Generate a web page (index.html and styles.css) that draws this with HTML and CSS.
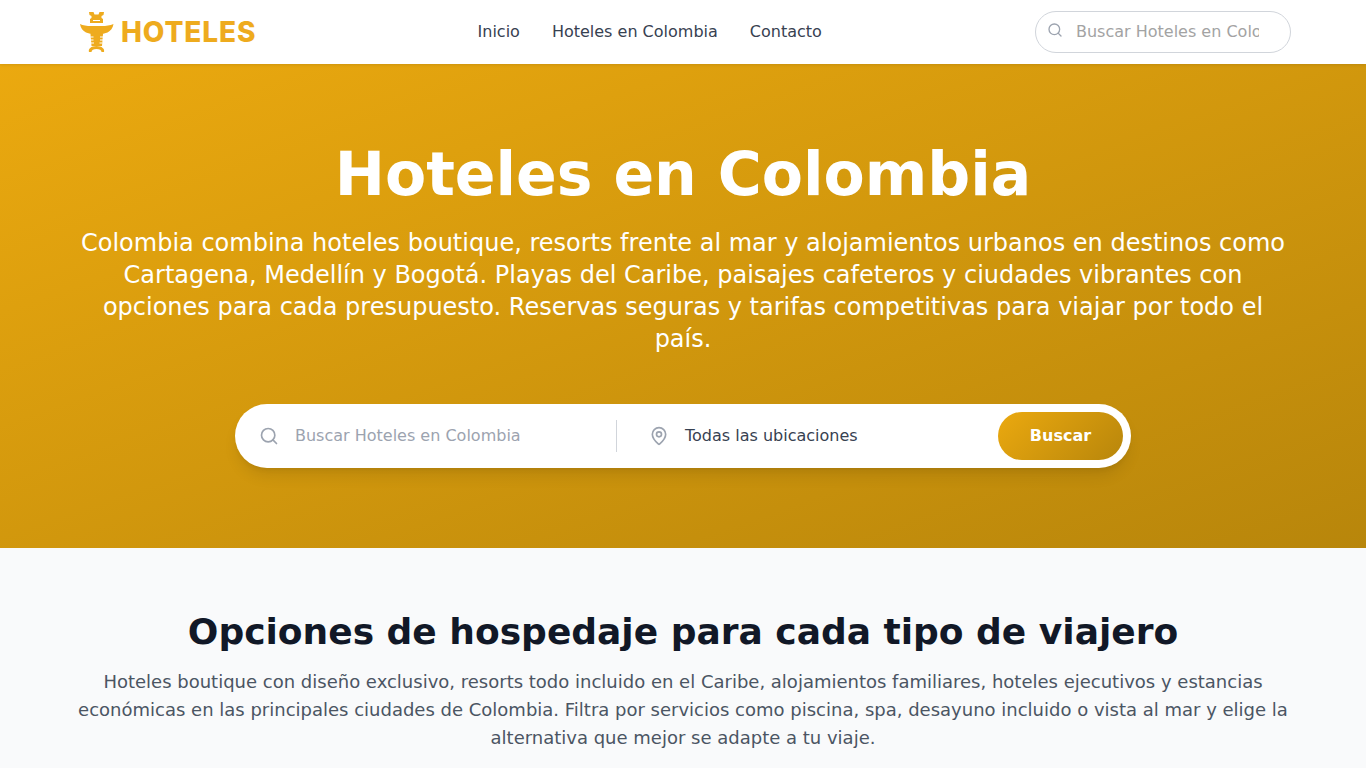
FILE: index.html
```html
<!DOCTYPE html>
<html lang="es">
<head>
  <meta charset="UTF-8">
  <title>Hoteles en Colombia</title>
  <link rel="stylesheet" href="styles.css">
</head>
<body>

  <!-- CABECERA -->
  <header class="cabecera">
    <div class="cabecera-interior">
      <a class="logo" href="#">
        <svg class="logo-icono" viewBox="0 0 34 40" width="34" height="40">
          <g fill="#eeab1e">
            <path d="M9 0h4.500l1 2.500h4L19.500 0H24l-.5 3-2 1v2l1.500 1v4H10V7l1.500-1V4l-2-1z"/>
            <path d="M0 12c3 1.500 7 2 11 2h11c4 0 8-.5 11.500-2-.5 4-3 7-6 8.500l-5 1.500H11l-5-1.500C3 19 .5 16 0 12z"/>
            <path d="M10.500 22h12.500l-1 12H11.500z"/>
            <path d="M9 40c-1-3 2-6 7.500-6s8.500 3 7.500 6h-2.500c0-2-2-3-5-3s-5 1-5 3z"/>
          </g>
          <path d="M10.500 25h3M10.500 28h3M11 31h3M20 25h3M20 28h3M19.500 31h3M13 8.500h7" stroke="#fff" stroke-width="1" fill="none"/>
        </svg>
        <span class="logo-texto">HOTELES</span>
      </a>
      <nav class="menu">
        <a href="#">Inicio</a>
        <a href="#">Hoteles en Colombia</a>
        <a href="#">Contacto</a>
      </nav>
      <div class="busca-cabecera">
        <svg class="icono icono-peq" viewBox="0 0 24 24"><circle cx="11" cy="11" r="8"/><path d="m21 21-4.300-4.300"/></svg>
        <input type="text" placeholder="Buscar Hoteles en Colombia">
      </div>
    </div>
  </header>

  <!-- HERO -->
  <section class="hero">
    <h1>Hoteles en Colombia</h1>
    <p>Colombia combina hoteles boutique, resorts frente al mar y alojamientos urbanos en destinos como Cartagena, Medellín y Bogotá. Playas del Caribe, paisajes cafeteros y ciudades vibrantes con opciones para cada presupuesto. Reservas seguras y tarifas competitivas para viajar por todo el país.</p>
    <form class="buscador">
      <div class="campo campo-texto">
        <svg class="icono" viewBox="0 0 24 24"><circle cx="11" cy="11" r="8"/><path d="m21 21-4.300-4.300"/></svg>
        <input type="text" placeholder="Buscar Hoteles en Colombia">
      </div>
      <div class="separador"></div>
      <div class="campo campo-lugar">
        <svg class="icono" viewBox="0 0 24 24"><path d="M20 10c0 5-5.500 10.200-7.400 11.800a1 1 0 0 1-1.200 0C9.500 20.200 4 15 4 10a8 8 0 0 1 16 0"/><circle cx="12" cy="10" r="3"/></svg>
        <span>Todas las ubicaciones</span>
      </div>
      <button type="button">Buscar</button>
    </form>
  </section>

  <!-- OPCIONES -->
  <section class="opciones">
    <h2>Opciones de hospedaje para cada tipo de viajero</h2>
    <p>Hoteles boutique con diseño exclusivo, resorts todo incluido en el Caribe, alojamientos familiares, hoteles ejecutivos y estancias económicas en las principales ciudades de Colombia. Filtra por servicios como piscina, spa, desayuno incluido o vista al mar y elige la alternativa que mejor se adapte a tu viaje.</p>
  </section>

</body>
</html>
```

FILE: styles.css
```css
* { box-sizing: border-box; }
html, body { height: 768px; overflow: hidden; }
body { margin: 0; font-family: "DejaVu Sans", sans-serif; line-height: 24px; color: #111827; background: #f9fafb; }
a { text-decoration: none; color: inherit; }
h1, h2, p { margin: 0; }

.icono {
  width: 20px; height: 20px; flex: none;
  fill: none; stroke: #9ca3af; stroke-width: 2; stroke-linecap: round; stroke-linejoin: round;
}
.icono-peq { width: 16px; height: 16px; }

/* cabecera */
.cabecera { height: 64px; background: #fff; position: relative; box-shadow: 0 1px 3px rgba(0, 0, 0, .1); }
.cabecera-interior {
  width: 1216px; height: 64px; margin: 0 auto;
  display: flex; align-items: center; justify-content: space-between;
}
.logo { display: flex; align-items: center; gap: 7px; margin: 0 8px 0 5px; }
.logo-icono { display: block; }
.logo-texto {
  font-family: Inter, sans-serif; font-weight: 800; font-size: 28px;
  line-height: 1; color: #eeab1e; letter-spacing: .9px;
}
.menu { display: flex; gap: 32px; font-size: 16px; line-height: 24px; color: #374151; }
.busca-cabecera {
  width: 256px; height: 42px; padding: 0 31px 0 12px;
  display: flex; align-items: center; gap: 12px;
  background: #fff; border: 1px solid #d1d5db; border-radius: 21px;
}
.busca-cabecera .icono { margin: -5px 1px 0 -1px; }
.busca-cabecera input {
  width: 100%; min-width: 0; border: 0; outline: 0; padding: 0; height: 24px;
  font: 16px/24px "DejaVu Sans", sans-serif; margin-top: -1px;
}
.busca-cabecera input::placeholder { color: #a3a3a3; }

/* hero */
.hero {
  height: 484px; padding-top: 80px;
  background: linear-gradient(to bottom right, #eba90f, #b8860b);
  color: #fff; text-align: center;
}
.hero h1 { font-size: 60px; line-height: 60px; font-weight: 700; margin-bottom: 23px; }
.hero p { width: 1216px; margin: 0 auto 49px; font-size: 24px; line-height: 32px; }
.buscador {
  width: 896px; height: 64px; margin: 0 auto; padding: 8px;
  display: flex; align-items: center;
  background: #fff; border-radius: 32px;
  box-shadow: 0 10px 15px -3px rgba(0, 0, 0, .1), 0 4px 6px -4px rgba(0, 0, 0, .1);
}
.campo { height: 48px; display: flex; align-items: center; gap: 16px; padding-left: 16px; padding-bottom: 1px; font-size: 16px; }
.campo .icono { margin-top: 1px; }
.campo-texto { width: 373px; }
.campo-texto input {
  flex: 1; min-width: 0; border: 0; outline: 0; padding: 0; height: 24px;
  font: 16px/24px "DejaVu Sans", sans-serif;
}
.campo-texto input::placeholder { color: #9ca3af; }
.separador { width: 1px; height: 32px; background: #d1d5db; }
.campo-lugar { flex: 1; padding-left: 32px; color: #374151; text-align: left; }
.buscador button {
  width: 125px; height: 48px; border: 0; border-radius: 24px; padding: 0 0 1px;
  background: linear-gradient(135deg, #eba90f, #b8860b);
  color: #fff; font: 700 16px/24px "DejaVu Sans", sans-serif;
}

/* opciones */
.opciones { padding-top: 64px; text-align: center; }
.opciones h2 { font-size: 36px; line-height: 40px; font-weight: 700; margin-bottom: 16px; }
.opciones p { width: 1216px; margin: 0 auto; font-size: 18px; line-height: 28px; color: #4b5563; }
```
